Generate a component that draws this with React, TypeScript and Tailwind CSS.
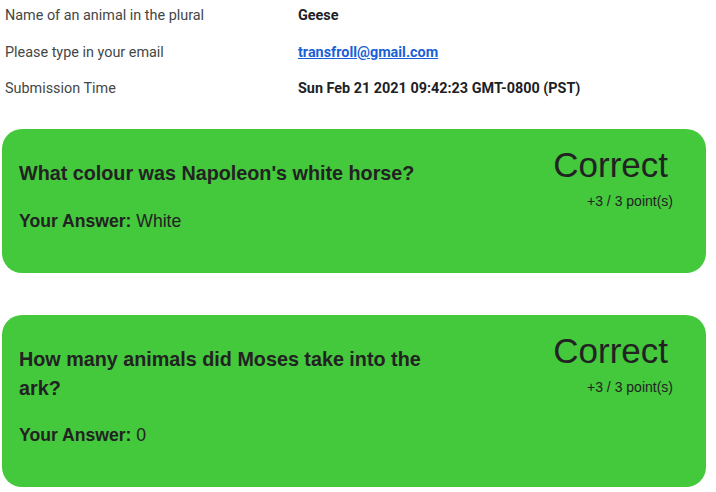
import React from 'react';

const rows = [
  { label: 'Name of an animal in the plural', value: 'Geese' },
  { label: 'Please type in your email', value: 'transfroll@gmail.com', link: true },
  { label: 'Submission Time', value: 'Sun Feb 21 2021 09:42:23 GMT-0800 (PST)' },
];

const questions = [
  { q: "What colour was Napoleon's white horse?", a: 'White' },
  { q: 'How many animals did Moses take into the ark?', a: '0' },
];

export default function App() {
  return (
    <div className="w-[716px] h-[492px] bg-white overflow-hidden font-['Roboto',sans-serif]">
      <div className="flex flex-col gap-[4.5px]">
        {rows.map((r) => (
          <div key={r.label} className="flex h-[32px] items-center text-[14.4px]">
            <div className="w-[298px] pl-[5px] text-[#444746]">{r.label}</div>
            {r.link ? (
              <a href="#" className="font-bold text-[#1a5fd6] underline">{r.value}</a>
            ) : (
              <div className="font-bold text-[#202124]">{r.value}</div>
            )}
          </div>
        ))}
      </div>

      <div className="mt-[24px] flex flex-col gap-[42px] pl-[2px] pr-[10px] font-['Liberation_Sans',Arial,sans-serif]">
        {questions.map((item) => (
          <div key={item.q} className="flex justify-between rounded-[20px] bg-[#44c83c] pl-[17px] pr-[33px] pt-[30px] pb-[40px] text-[#222]">
            <div className="w-[420px]">
              <h3 className="text-[19.75px] font-bold leading-[29px]">{item.q}</h3>
              <p className="mt-[20.5px] text-[17.6px] leading-[24px]">
                <span className="font-bold">Your Answer:</span> {item.a}
              </p>
            </div>
            <div className="-mt-[14px] flex flex-col items-end">
              <div className="text-[35px] leading-[40px] pr-[5px]">Correct</div>
              <div className="mt-[8px] text-sm leading-[16px]">+3 / 3 point(s)</div>
            </div>
          </div>
        ))}
      </div>
    </div>
  );
}
